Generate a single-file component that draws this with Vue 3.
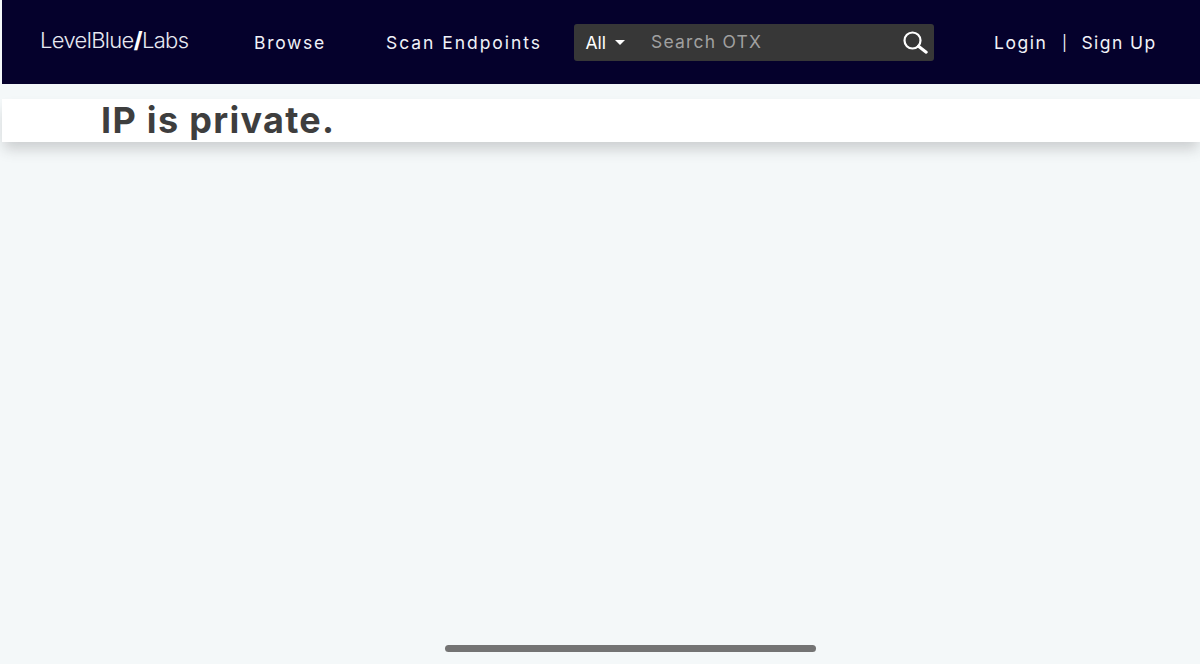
<template>
  <div class="page">
    <header class="topbar">
      <a class="logo">LevelBlue<b class="slash">/</b>Labs</a>
      <nav class="mainNav">
        <a class="navLink browse">Browse</a>
        <a class="navLink endpoints">Scan Endpoints</a>
      </nav>
      <div class="search">
        <div class="scope">
          <span>All</span>
          <i class="caret"></i>
        </div>
        <span class="placeholder">Search OTX</span>
        <svg class="searchIcon" width="26" height="24" viewBox="0 0 26 24" fill="none" stroke="#fff">
          <circle cx="10.5" cy="10.5" r="8" stroke-width="2.2" />
          <path d="M16.5 16.2 L24.2 22.2" stroke-width="3" stroke-linecap="round" />
        </svg>
      </div>
      <div class="account">
        <a class="navLink login">Login</a>
        <span class="divider">|</span>
        <a class="navLink signup">Sign Up</a>
      </div>
    </header>

    <section class="notice">
      <h1>IP is private.</h1>
    </section>

    <div class="scrollThumb"></div>
  </div>
</template>

<script setup>
</script>

<style>
html,
body {
  margin: 0;
  background: #f4f8f9;
}
</style>

<style scoped>
.page {
  position: relative;
  height: 664px;
  overflow: hidden;
  padding-left: 2px;
  background: #f4f8f9;
  font-family: Inter, "Open Sans", sans-serif;
}

.topbar {
  display: flex;
  align-items: center;
  height: 84px;
  background: #05012c;
  color: #f1f2f8;
}

.logo {
  width: 186px;
  margin-left: 38px;
  margin-top: -4px;
  font-size: 22px;
  font-weight: 300;
  letter-spacing: -0.65px;
  color: #e8e9f2;
}

.slash {
  font-weight: 800;
  color: #fff;
}

.mainNav {
  display: flex;
  align-items: center;
}

.navLink {
  font-size: 17.5px;
  font-weight: 400;
  letter-spacing: 1.7px;
  color: #f1f2f8;
}

.browse {
  margin-left: 28px;
  width: 132px;
}

.endpoints {
  width: 188px;
  letter-spacing: 1.95px;
}

.search {
  display: flex;
  align-items: center;
  width: 360px;
  height: 37px;
  margin-top: 1px;
  border-radius: 3px;
  background: #373737;
}

.scope {
  display: flex;
  align-items: center;
  width: 77px;
  padding-left: 11.5px;
  box-sizing: border-box;
  font-size: 17.5px;
  color: #fff;
}

.caret {
  width: 0;
  height: 0;
  margin-left: 9px;
  border-left: 5.5px solid transparent;
  border-right: 5.5px solid transparent;
  border-top: 5px solid #fff;
}

.placeholder {
  flex: 1;
  margin-top: -2px;
  font-size: 17.5px;
  letter-spacing: 1.2px;
  color: #a0a0a0;
}

.searchIcon {
  margin-right: 6px;
  margin-top: -1px;
}

.account {
  display: flex;
  align-items: center;
  margin-left: 60px;
}

.login {
  letter-spacing: 1.55px;
}

.signup {
  letter-spacing: 1.44px;
}

.divider {
  margin: 0 14.5px;
  font-size: 15px;
  color: #f1f2f8;
}

.notice {
  margin-top: 15px;
  height: 43px;
  background: #fff;
  box-shadow: 0 9px 14px -2px rgba(60, 55, 60, 0.22);
}

.notice h1 {
  margin: 0;
  padding-left: 99px;
  font-size: 36px;
  line-height: 43px;
  font-weight: 700;
  letter-spacing: 1.3px;
  color: #3e3e3e;
}

.scrollThumb {
  position: absolute;
  left: 445px;
  top: 645px;
  width: 371px;
  height: 7px;
  border-radius: 4px;
  background: #747474;
}
</style>
